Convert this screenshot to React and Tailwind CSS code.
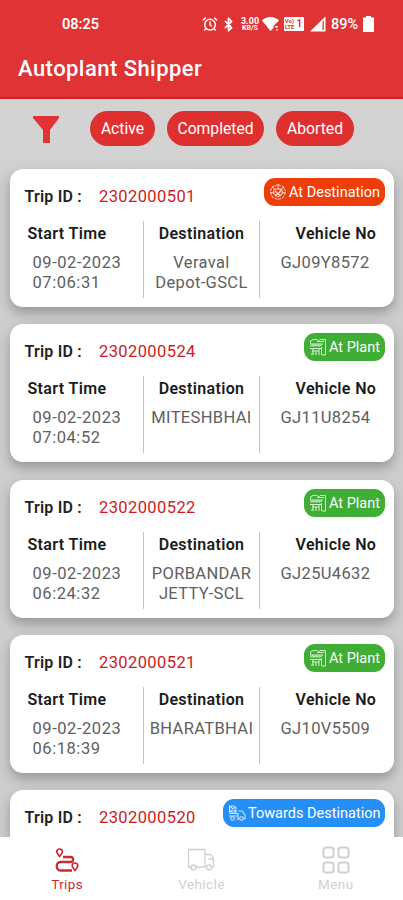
import React, { useState } from 'react';
import { AlarmClock, Bluetooth } from 'lucide-react';

const trips = [
  { id: '2302000501', date: '09-02-2023', time: '07:06:31', dest: ['Veraval', 'Depot-GSCL'], vehicle: 'GJ09Y8572', status: 'destination' },
  { id: '2302000524', date: '09-02-2023', time: '07:04:52', dest: ['MITESHBHAI'], vehicle: 'GJ11U8254', status: 'plant' },
  { id: '2302000522', date: '09-02-2023', time: '06:24:32', dest: ['PORBANDAR', 'JETTY-SCL'], vehicle: 'GJ25U4632', status: 'plant' },
  { id: '2302000521', date: '09-02-2023', time: '06:18:39', dest: ['BHARATBHAI'], vehicle: 'GJ10V5509', status: 'plant' },
  { id: '2302000520', status: 'towards' },
];

const statuses = {
  destination: { label: 'At Destination', color: 'bg-[#ee3d08]', width: 'w-[121px]', Icon: IconDestination },
  plant: { label: 'At Plant', color: 'bg-[#3eae35]', width: 'w-[81px]', Icon: IconPlant },
  towards: { label: 'Towards Destination', color: 'bg-[#268ff5]', width: 'w-[162px]', Icon: IconTowards },
};

function IconDestination() {
  return (
    <svg className="w-[18px] h-[18px] shrink-0" viewBox="0 0 18 18" fill="none" stroke="#ffd9cc" strokeWidth="1">
      <path d="M9 1.5 15 4l1.7 5-2.5 5.5L9 16.5l-5.3-2L1.3 9 3 4Z" strokeDasharray="3 1" />
      <path d="M9 1.5v4M3 4l3.5 3M15 4l-3.5 3M1.5 9.5l4 .5M16.5 9.5l-4 .5M5.5 6h7l1.5 4-5 4-5-4Z" />
      <path d="m6 8 3 3 3.5-4M6 13l3-2 3 2" strokeWidth="1.3" />
    </svg>
  );
}

function IconPlant() {
  return (
    <svg className="w-[18px] h-[18px] shrink-0" viewBox="0 0 18 18" fill="none" stroke="#d5f2cf" strokeWidth="1">
      <path d="M1.5 6V3L4 1.5h4L9.5 3 11 1.5h5.5v15.5H13M8 3.5h7M1 6h13M1 8.5l3-2v2l3-2v2l3-2v2l3-2M1 10.5h12M3 13h7M4 11v5.5M7 13v4M10 11v6M2 16h3M12.5 9v8" />
    </svg>
  );
}

function IconTowards() {
  return (
    <svg className="w-[18px] h-[18px] shrink-0" viewBox="0 0 18 18" fill="none" stroke="#c9e4ff" strokeWidth="1.1">
      <path d="M1.5 2H6l2 2v4H1.5ZM2 2l6 6M7 3 2 8M1 9.5h9V15M10.5 7H14l3 4v4h-1.5M1 12h9M8.5 15h3" />
      <circle cx="4.5" cy="14.5" r="1.8" />
      <circle cx="13.5" cy="14.5" r="1.8" />
    </svg>
  );
}

// phone status bar
function StatusBar() {
  return (
    <div className="flex h-[48px] items-center pl-[62px] pr-[29px] text-white">
      <span className="pt-px text-[14.5px] font-semibold leading-5">08:25</span>
      <div className="ml-auto flex items-center">
        <AlarmClock className="h-4 w-4" strokeWidth={2.2} />
        <Bluetooth className="ml-[3.5px] h-[15px] w-[15px]" strokeWidth={2.8} />
        <span className="ml-[4px] flex w-[20px] flex-col items-center font-bold">
          <span className="text-[9px] leading-[8px]">3.00</span>
          <span className="text-[7px] leading-[7px]">KB/S</span>
        </span>
        <svg className="ml-[2px] h-4 w-[18px]" viewBox="0 0 18 16" fill="currentColor">
          <path d="M0 4.5C4-.3 13-.3 17 4.5L11.5 10v2L8.5 15Z" />
          <path d="M13 10h3v1.5h-3zM14 13h2v1.5h-2z" opacity=".8" />
        </svg>
        <span className="ml-[3.5px] flex h-[14px] w-[20px] items-center justify-center gap-[2px] rounded-[1px] bg-white font-bold text-[#df3335]">
          <span className="flex flex-col text-[6px] leading-[6.5px]">
            <span>Vo)</span>
            <span>LTE</span>
          </span>
          <span className="text-[10px] leading-[12px]">1</span>
        </span>
        <svg className="ml-[6.5px] h-4 w-[16px]" viewBox="0 0 16 16" fill="currentColor">
          <path d="M0 15.5 15.5.5v15ZM12.5 5.5v8.5h1.3V4.5Z" fillRule="evenodd" />
        </svg>
        <span className="ml-[5px] w-[28px] whitespace-nowrap pt-px text-[14.5px] font-medium leading-5">89%</span>
        <svg className="ml-[4px] h-4 w-[11px]" viewBox="0 0 11 16" fill="currentColor">
          <path d="M3 0h5v1.5h3V16H0V1.5h3Z" />
        </svg>
      </div>
    </div>
  );
}

function StatusBadge({ status }) {
  const { label, color, width, Icon } = statuses[status];
  return (
    <div className={`flex h-[28px] items-center gap-[2px] rounded-[11px] pl-[5px] text-white ${color} ${width}`}>
      <Icon />
      <span className="whitespace-nowrap pt-[2px] text-[14.5px]">{label}</span>
    </div>
  );
}

function TripDetails({ trip }) {
  return (
    <div className="flex h-[77px] text-[16.5px] leading-5 tracking-[0.35px] text-[#606060]">
      <div className="w-[133px] pl-[18px] pt-[3px]">
        <h3 className="text-[16px] font-semibold text-[#1b1b1b]">Start Time</h3>
        <div className="pl-[5px] pt-[9px] tracking-[0.55px]">
          <p>{trip.date}</p>
          <p>{trip.time}</p>
        </div>
      </div>
      <div className="flex w-[117px] flex-col items-center whitespace-nowrap border-x border-[#c4c4c4] pl-px pt-[3px]">
        <h3 className="text-[16px] font-semibold text-[#1b1b1b]">Destination</h3>
        <div className="pt-[9px] text-center">
          {trip.dest.map((line) => <p key={line}>{line}</p>)}
        </div>
      </div>
      <div className="pl-[21px] pt-[3px]">
        <h3 className="pl-[15px] text-[16px] font-semibold text-[#1b1b1b]">Vehicle No</h3>
        <p className="pt-[9px]">{trip.vehicle}</p>
      </div>
    </div>
  );
}

function TripCard({ trip }) {
  return (
    <div className="h-[138px] shrink-0 rounded-[13px] bg-white shadow-[0_6px_12px_rgba(0,0,0,0.26)]">
      <div className="flex h-[52px] items-start pl-[15px] pr-[9px] leading-5">
        <span className="mt-[18px] w-[74.5px] text-[16px] font-semibold tracking-[0.2px] text-[#222]">Trip ID :</span>
        <span className="mt-[18px] text-[16.5px] tracking-[0.4px] text-[#cc1b22]">{trip.id}</span>
        <div className="ml-auto mt-[9px]">
          <StatusBadge status={trip.status} />
        </div>
      </div>
      {trip.date && <TripDetails trip={trip} />}
    </div>
  );
}

function IconTrips() {
  return (
    <svg className="h-7 w-7" viewBox="0 0 28 28" fill="none" stroke="currentColor" strokeWidth="1.7">
      <path d="M10 11H17.5c3.500 0 3.500 5 0 5H7.500c-5 0-5 8.500 0 8.500H19" strokeWidth="2.300" />
      <path d="M6.500 10.500C4.500 8 3.800 7 3.800 5.800a2.800 2.800 0 0 1 5.600 0c0 1.200-.8 2.200-2.900 4.700Z" />
      <path d="M22 24.500c-2-2.500-2.800-3.500-2.800-4.700a2.800 2.800 0 0 1 5.600 0c0 1.200-.8 2.200-2.800 4.700Z" />
    </svg>
  );
}

function IconTruck() {
  return (
    <svg className="h-7 w-7" viewBox="0 0 28 28" fill="none" stroke="currentColor" strokeWidth="1.3">
      <path d="M4 21H1.5V3.5H18V21H9M18 8.500h4c3 0 4.500 3 4.500 5.500v7h-2M18 21h1.500M21.500 13h5" />
      <circle cx="6.500" cy="21.500" r="2.500" />
      <circle cx="22" cy="21.500" r="2.500" />
    </svg>
  );
}

function IconMenu() {
  return (
    <svg className="h-7 w-7" viewBox="0 0 28 28" fill="none" stroke="currentColor" strokeWidth="2">
      <rect x="1.5" y="1.5" width="10" height="10" rx="2.5" />
      <rect x="16.5" y="1.5" width="10" height="10" rx="2.5" />
      <rect x="1.5" y="16.5" width="10" height="10" rx="2.5" />
      <rect x="16.5" y="16.5" width="10" height="10" rx="2.5" />
    </svg>
  );
}

export default function App() {
  const [tab, setTab] = useState('Trips');
  const tabs = [
    { name: 'Trips', icon: <IconTrips /> },
    { name: 'Vehicle', icon: <IconTruck /> },
    { name: 'Menu', icon: <IconMenu /> },
  ];

  return (
    <div className="flex h-[900px] w-[403px] flex-col overflow-hidden bg-[#d3d3d3] font-[Roboto,sans-serif]">
      <header className="h-[99px] shrink-0 border-b-2 border-[#cf2022] bg-[#df3335]">
        <StatusBar />
        <h1 className="pl-[18px] pt-[8px] text-[22px] font-medium leading-[26px] tracking-[0.45px] text-white">
          Autoplant Shipper
        </h1>
      </header>

      <div className="flex h-[50px] shrink-0 items-start pl-[33px] pt-[12px] text-[15.7px] text-white">
        <svg className="mt-[5px] h-[27px] w-[26px]" viewBox="0 0 26 27" fill="#df3335">
          <path d="M0 0h26v2L17 14v13H10V14L0 2Z" />
        </svg>
        <button className="ml-[31px] h-[35px] w-[65px] rounded-full bg-[#df3030]">Active</button>
        <button className="ml-[12px] h-[35px] w-[97px] rounded-full bg-[#df3030]">Completed</button>
        <button className="ml-[12px] h-[35px] w-[78px] rounded-full bg-[#df3030]">Aborted</button>
      </div>

      <main className="flex min-h-0 grow flex-col gap-[17.3px] overflow-hidden bg-linear-to-b from-[#d3d3d3] to-[#cdcdcd] to-5% pl-[9.5px] pr-[9px] pt-[20px]">
        {trips.map((trip) => <TripCard key={trip.id} trip={trip} />)}
      </main>

      <nav className="flex h-[63px] shrink-0 bg-white">
        {tabs.map(({ name, icon }) => (
          <button
            key={name}
            onClick={() => setTab(name)}
            className={`flex flex-1 flex-col items-center pt-[9px] ${tab === name ? 'text-[#cc2b31]' : 'text-[#d0d0d0]'}`}
          >
            {icon}
            <span className="pt-px text-[13.5px] leading-[18px] tracking-[0.4px]">{name}</span>
          </button>
        ))}
      </nav>
    </div>
  );
}
